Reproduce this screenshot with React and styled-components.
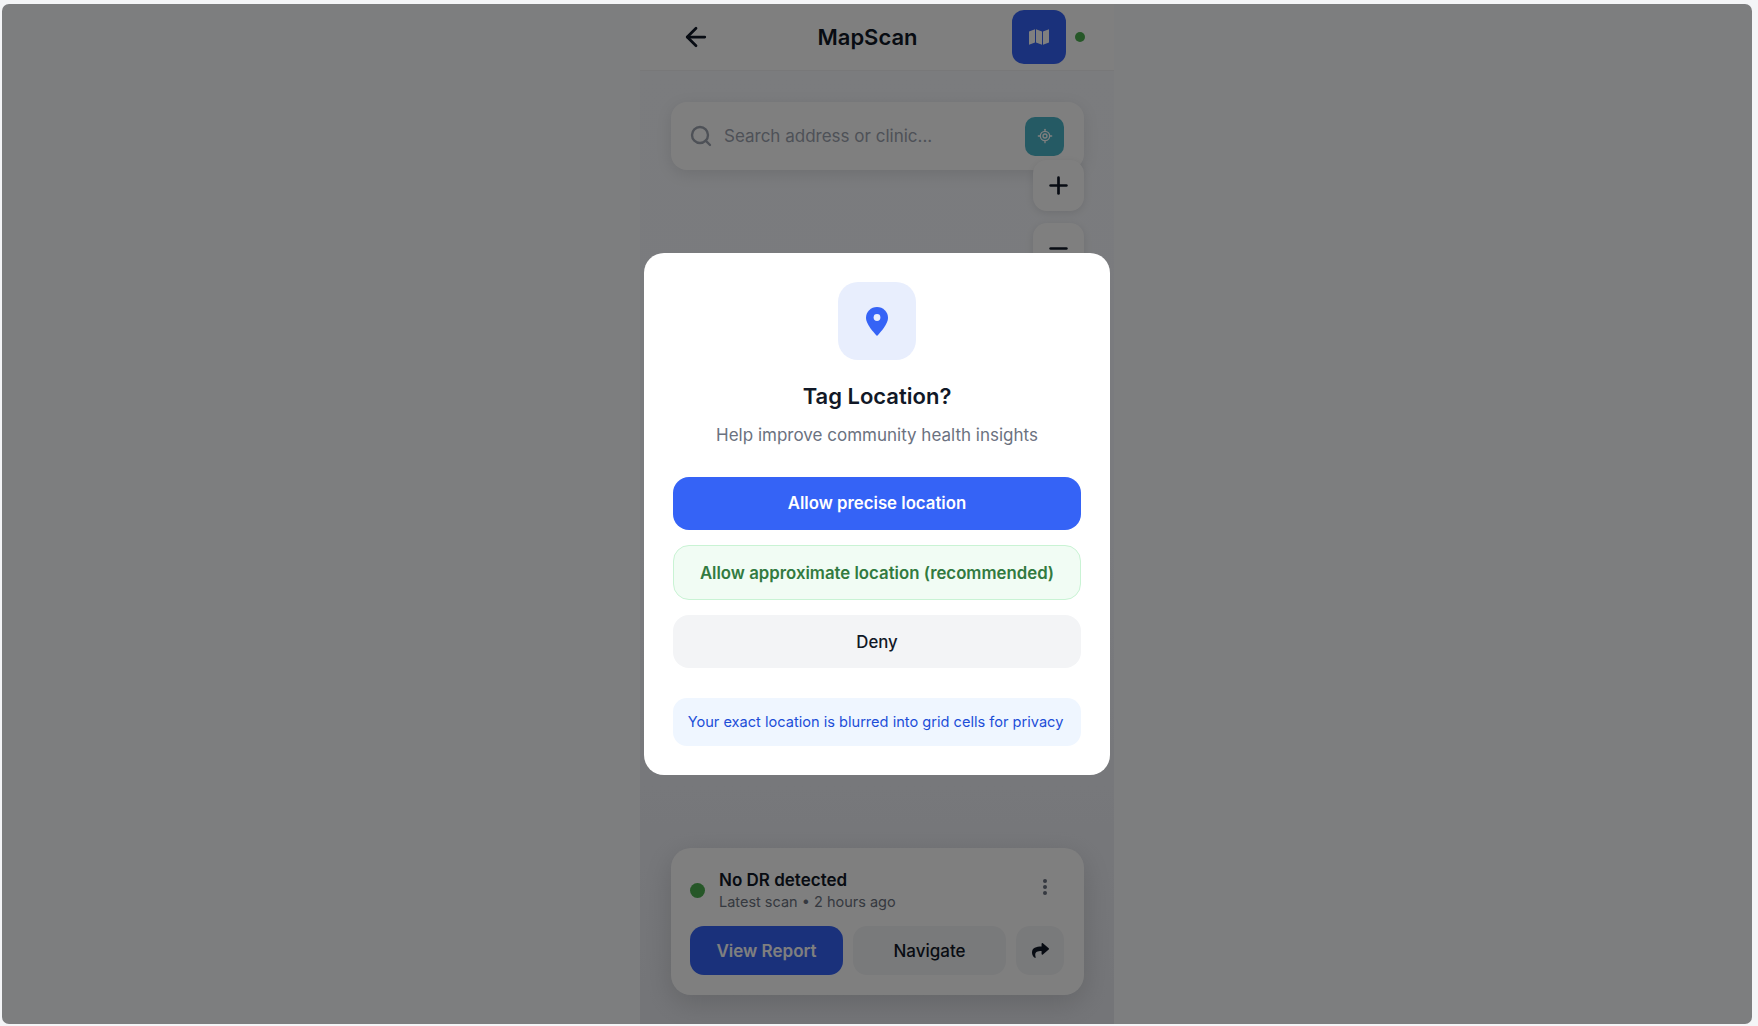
import React from 'react';
import styled, { createGlobalStyle } from 'styled-components';
import { ArrowLeft, Search, LocateFixed, Plus, Minus } from 'lucide-react';
import { FaShare } from 'react-icons/fa';

const GlobalStyle = createGlobalStyle`
  html, body {
    margin: 0;
    padding: 0;
    height: 100%;
    background: #f4f5f7;
    font-family: Inter, "Noto Sans", sans-serif;
    color: #111827;
    overflow: hidden;
  }
  #root {
    height: 100%;
  }
  * {
    box-sizing: border-box;
  }
`;

const Frame = styled.div`
  position: relative;
  width: 1750px;
  height: 1020px;
  margin: 4px 0 0 2px;
  border-radius: 7px;
  overflow: hidden;
  background: #fafcff;
  display: flex;
  justify-content: center;
`;

const Phone = styled.div`
  width: 474px;
  height: 100%;
  display: flex;
  flex-direction: column;
  background: #f9fafb;
`;

const Header = styled.header`
  height: 67px;
  flex: none;
  display: flex;
  align-items: center;
  padding: 0 29px 0 31px;
  background: #ffffff;
  border-bottom: 1px solid #f0f1f3;
`;

const BackButton = styled.button`
  width: 50px;
  height: 50px;
  flex: none;
  display: flex;
  align-items: center;
  justify-content: center;
  padding: 0;
  border: 0;
  background: none;
  color: #111827;
`;

const Title = styled.h1`
  flex: 1;
  margin: 0;
  padding-left: 2px;
  text-align: center;
  font-size: 22px;
  line-height: 30px;
  font-weight: 600;
  color: #111827;
`;

const MapButton = styled.div`
  width: 54px;
  height: 54px;
  flex: none;
  margin-right: 9px;
  border-radius: 12px;
  background: #3563f6;
  display: flex;
  align-items: center;
  justify-content: center;
`;

const StatusDot = styled.span`
  flex: none;
  width: ${({ size }) => size}px;
  height: ${({ size }) => size}px;
  border-radius: 50%;
  background: #4caf50;
`;

const MapArea = styled.main`
  position: relative;
  flex: 1;
  display: flex;
  flex-direction: column;
  justify-content: space-between;
  padding: 31px 30px 29px 31px;
  background: linear-gradient(180deg, #f6f8fc 0%, #f4f6fc 50%, #e8eaf0 100%);
`;

const SearchBar = styled.div`
  height: 68px;
  display: flex;
  align-items: center;
  padding: 0 20px 0 18px;
  border-radius: 16px;
  background: #ffffff;
  box-shadow: 0 4px 16px rgba(0, 0, 0, 0.1);
`;

const SearchText = styled.span`
  flex: 1;
  margin-left: 11px;
  font-size: 17px;
  color: #9ca3af;
`;

const LocateButton = styled.div`
  width: 39px;
  height: 39px;
  border-radius: 10px;
  background: #4bb5c8;
  color: #ffffff;
  display: flex;
  align-items: center;
  justify-content: center;
`;

const ZoomControls = styled.div`
  position: absolute;
  top: 89px;
  right: 30px;
  display: flex;
  flex-direction: column;
  gap: 12px;
`;

const ZoomButton = styled.div`
  width: 51px;
  height: 51px;
  border-radius: 14px;
  background: #ffffff;
  color: #111827;
  box-shadow: 0 2px 8px rgba(0, 0, 0, 0.1);
  display: flex;
  align-items: center;
  justify-content: center;
`;

const ResultCard = styled.section`
  height: 147px;
  padding: 19px 20px 19px 19px;
  border-radius: 20px;
  background: #ffffff;
  box-shadow: 0 8px 28px rgba(0, 0, 0, 0.14);
`;

const ResultRow = styled.div`
  height: 41px;
  display: flex;
  align-items: center;
  gap: 14px;
  margin: 3px 0 15px;
`;

const ResultText = styled.div`
  flex: 1;
  min-width: 0;
`;

const ResultTitle = styled.div`
  font-size: 17px;
  line-height: 22px;
  font-weight: 600;
  color: #111827;
`;

const ResultMeta = styled.div`
  font-size: 14.5px;
  line-height: 21px;
  color: #6b7280;
`;

const MenuDots = styled.svg`
  width: 4px;
  height: 16px;
  margin: -7px 17px 0 0;
  fill: #6b7280;
`;

const ActionRow = styled.div`
  display: flex;
  gap: 10px;
`;

const ActionButton = styled.button`
  flex: ${({ square }) => (square ? '0 0 48px' : '1')};
  height: 49px;
  padding: 0;
  border: 0;
  border-radius: 14px;
  display: flex;
  align-items: center;
  justify-content: center;
  font-family: inherit;
  font-size: 17px;
  font-weight: ${({ primary }) => (primary ? 600 : 500)};
  background: ${({ primary }) => (primary ? '#3563f6' : '#f3f4f6')};
  color: ${({ primary }) => (primary ? '#ffffff' : '#111827')};
`;

const Backdrop = styled.div`
  position: absolute;
  inset: 0;
  display: flex;
  align-items: center;
  justify-content: center;
  background: rgba(0, 0, 0, 0.5);
`;

const Modal = styled.div`
  width: 466px;
  height: 522px;
  padding: 29px;
  border-radius: 20px;
  background: #ffffff;
  display: flex;
  flex-direction: column;
  align-items: center;
`;

const PinBox = styled.div`
  width: 78px;
  height: 78px;
  flex: none;
  border-radius: 20px;
  background: #e8eefd;
  display: flex;
  align-items: center;
  justify-content: center;
`;

const ModalTitle = styled.h2`
  margin: 21px 0 0;
  font-size: 22px;
  line-height: 30px;
  font-weight: 600;
  color: #111827;
`;

const ModalText = styled.p`
  margin: 12px 0 0;
  font-size: 17px;
  line-height: 24px;
  color: #6b7280;
`;

const Choices = styled.div`
  width: 100%;
  margin-top: 30px;
  display: flex;
  flex-direction: column;
  gap: 15px;
`;

const Choice = styled.button`
  width: 100%;
  height: ${({ kind }) => (kind === 'green' ? 55 : 53)}px;
  padding: ${({ kind }) => (kind === 'blue' ? '0 0 1px' : '0')};
  border-radius: 16px;
  font-family: inherit;
  font-size: 16.8px;
  font-weight: ${({ kind }) => (kind === 'plain' ? 500 : 600)};
  border: ${({ kind }) => (kind === 'green' ? '1px solid #c9f3d4' : '0')};
  background: ${({ kind }) =>
    kind === 'blue' ? '#3563f6' : kind === 'green' ? '#f1fcf4' : '#f3f4f6'};
  color: ${({ kind }) =>
    kind === 'blue' ? '#ffffff' : kind === 'green' ? '#327a40' : '#111827'};
`;

const PrivacyNote = styled.div`
  width: 100%;
  height: 48px;
  margin-top: 30px;
  padding: 0 3px 1px 0;
  border-radius: 14px;
  background: #eff6ff;
  color: #1d4ed8;
  font-size: 14.6px;
  display: flex;
  align-items: center;
  justify-content: center;
`;

const FoldedMapIcon = () => (
  <svg width="20" height="16" viewBox="0 0 20 16" fill="#ffffff">
    <path d="M0 2.6 6 0.2V13.4L0 15.8Z" />
    <path d="M7 0.2 13 2.6V15.8L7 13.4Z" />
    <path d="M14 2.6 20 0.2V13.4L14 15.8Z" />
  </svg>
);

const PinIcon = () => (
  <svg width="22" height="29" viewBox="0 0 22 29">
    <path
      fill="#3563f6"
      d="M11 0C4.9 0 0 4.8 0 10.8 0 17 6.8 24.6 11 29 15.2 24.6 22 17 22 10.8 22 4.8 17.1 0 11 0Z"
    />
    <circle cx="11" cy="10.5" r="3.4" fill="#e8eefd" />
  </svg>
);

export default function App() {
  return (
    <>
      <GlobalStyle />
      <Frame>
        <Phone>
          <Header>
            <BackButton>
              <ArrowLeft size={30} strokeWidth={2.2} />
            </BackButton>
            <Title>MapScan</Title>
            <MapButton>
              <FoldedMapIcon />
            </MapButton>
            <StatusDot size={10} />
          </Header>
          <MapArea>
            <SearchBar>
              <Search size={24} strokeWidth={2.4} color="#9ca3af" />
              <SearchText>Search address or clinic...</SearchText>
              <LocateButton>
                <LocateFixed size={16} strokeWidth={2} />
              </LocateButton>
            </SearchBar>
            <ZoomControls>
              <ZoomButton>
                <Plus size={27} strokeWidth={2.4} />
              </ZoomButton>
              <ZoomButton>
                <Minus size={27} strokeWidth={2.4} />
              </ZoomButton>
            </ZoomControls>
            <ResultCard>
              <ResultRow>
                <StatusDot size={15} />
                <ResultText>
                  <ResultTitle>No DR detected</ResultTitle>
                  <ResultMeta>Latest scan • 2 hours ago</ResultMeta>
                </ResultText>
                <MenuDots viewBox="0 0 4 16">
                  <circle cx="2" cy="2" r="2" />
                  <circle cx="2" cy="8" r="2" />
                  <circle cx="2" cy="14" r="2" />
                </MenuDots>
              </ResultRow>
              <ActionRow>
                <ActionButton primary>View Report</ActionButton>
                <ActionButton>Navigate</ActionButton>
                <ActionButton square>
                  <FaShare size={17} />
                </ActionButton>
              </ActionRow>
            </ResultCard>
          </MapArea>
        </Phone>
        <Backdrop>
          <Modal>
            <PinBox>
              <PinIcon />
            </PinBox>
            <ModalTitle>Tag Location?</ModalTitle>
            <ModalText>Help improve community health insights</ModalText>
            <Choices>
              <Choice kind="blue">Allow precise location</Choice>
              <Choice kind="green">Allow approximate location (recommended)</Choice>
              <Choice kind="plain">Deny</Choice>
            </Choices>
            <PrivacyNote>Your exact location is blurred into grid cells for privacy</PrivacyNote>
          </Modal>
        </Backdrop>
      </Frame>
    </>
  );
}
